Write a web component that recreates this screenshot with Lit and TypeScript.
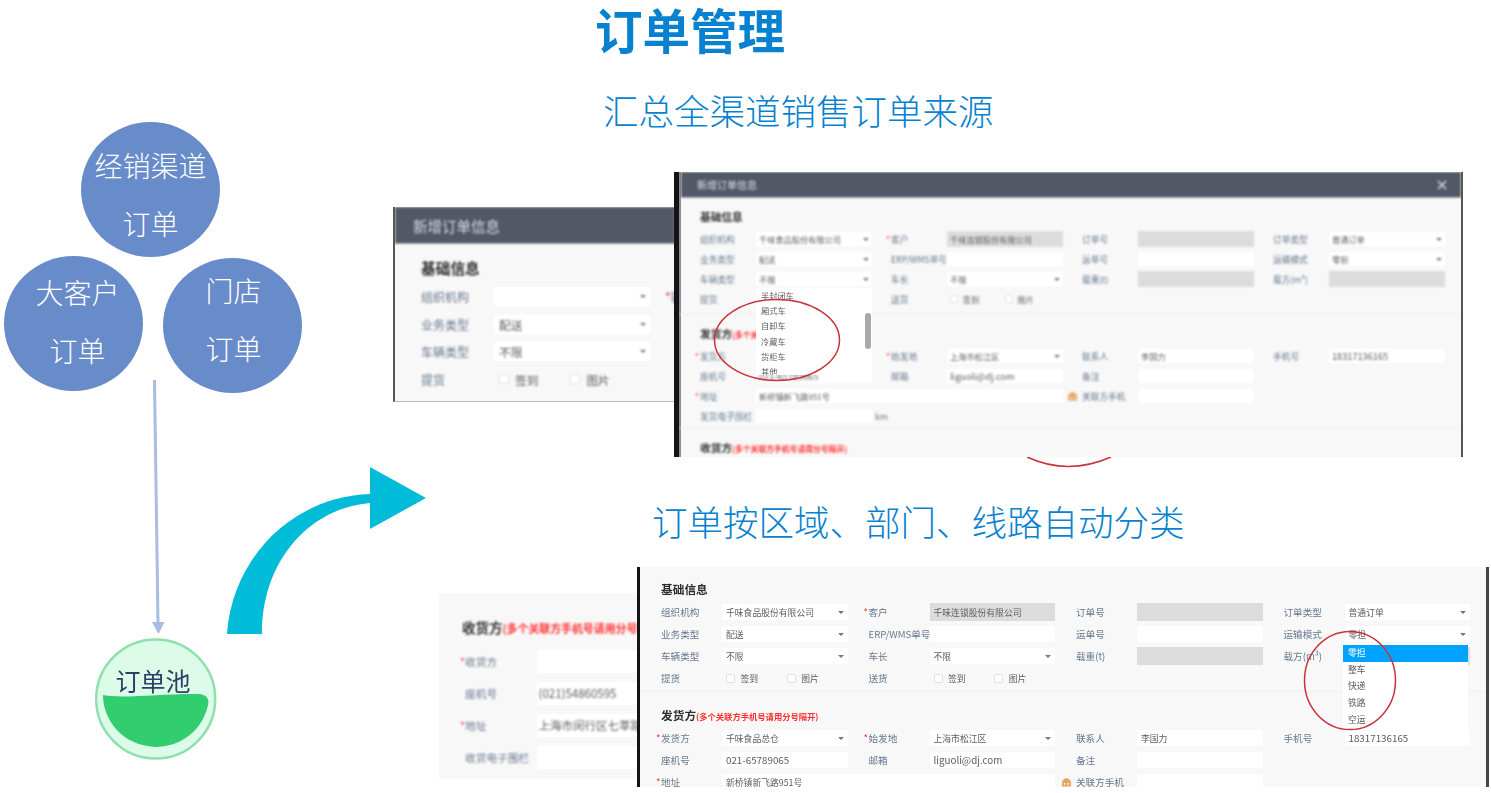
import { LitElement, html, css, svg } from "lit";
import { customElement } from "lit/decorators.js";

const arrowIcon = svg`<path d="M0 0h6L3 3z" fill="#777"></path>`;

const L = (text: string, req = false, icon = false) => html`<div class="lb">
  ${req ? html`<span class="star">*</span>` : ""}${icon
    ? html`<svg class="house" viewBox="0 0 12 11"><path d="M1 10.500V6.500a5 5 0 0 1 10 0v4z" fill="#e6a765"></path><circle cx="4" cy="7.500" r="1" fill="#fff"></circle><circle cx="8" cy="7.500" r="1" fill="#fff"></circle></svg>`
    : ""}${text}
</div>`;
const S = (v = "") => html`<div class="in sel"><span>${v}</span><svg class="caret" viewBox="0 0 6 3">${arrowIcon}</svg></div>`;
const I = (v = "", cls = "") => html`<div class="in ${cls}"><span>${v}</span></div>`;
const D = (v = "") => html`<div class="in dis"><span>${v}</span></div>`;
const C = () => html`<div class="checks">
  <i class="cb"></i><span>签到</span><i class="cb second"></i><span>图片</span>
</div>`;
const R = (...cells: unknown[]) => html`<div class="row">${cells}</div>`;

const baseRows = (org = "千味食品股份有限公司") => html`
  ${R(L("组织机构"), S(org), L("客户", true), D("千味连锁股份有限公司"), L("订单号"), D(), L("订单类型"), S("普通订单"))}
  ${R(L("业务类型"), S("配送"), L("ERP/WMS单号"), I(), L("运单号"), I(), L("运输模式"), S("零担"))}
  ${R(L("车辆类型"), S("不限"), L("车长"), S("不限"), L("载重(t)"), D(), L("载方(m³)"), D())}
  ${R(L("提货"), C(), L("送货"), C())}
`;

const shipRows = html`
  ${R(L("发货方", true), S("千味食品总仓"), L("始发地", true), S("上海市松江区"), L("联系人"), I("李国力"), L("手机号"), I("18317136165", "num"))}
  ${R(L("座机号"), I("021-65789065", "num"), L("邮箱"), I("liguoli@dj.com", "num"), L("备注"), I())}
  <div class="row">
    ${L("地址", true)}
    <div class="in span3"><span>新桥镇新飞路951号</span></div>
    ${L("关联方手机", false, true)}${I()}
  </div>
`;

const hint = "(多个关联方手机号请用分号隔开)";

@customElement("app-root")
export class AppRoot extends LitElement {
  static styles = css`
    :host { display: block; font-family: "Noto Sans CJK SC", "Noto Sans", sans-serif; }
    .slide { position: relative; width: 1491px; height: 793px; overflow: hidden; background: #fff; }

    .title, .sub { position: absolute; margin: 0; color: #0781d0; white-space: nowrap; line-height: 1; }
    .title { left: 595px; top: 5px; font-size: 47.500px; font-weight: 700; filter: blur(0.3px); }
    .sub { font-size: 35.500px; font-weight: 300; }
    .s1 { left: 603px; top: 92px; }
    .s2 { left: 652px; top: 503px; }

    .bubble {
      position: absolute; box-sizing: border-box; width: 139px; height: 135px; border-radius: 50%;
      background: #688bc9; color: #fff; font-size: 28px; line-height: 58px; font-weight: 300;
      display: flex; flex-direction: column; align-items: center; justify-content: center;
    }
    .b1 { left: 81px; top: 122px; padding-top: 9px; }
    .b2 { left: 4px; top: 256px; padding: 0 0 6px 8px; }
    .b3 { left: 163px; top: 258px; padding: 0 0 13px 2px; }

    .art { position: absolute; inset: 0; width: 1491px; height: 793px; pointer-events: none; }
    .under { filter: blur(0.4px); }
    .pool-text { position: absolute; left: 113px; top: 662px; width: 80px; text-align: center; font-size: 25px; line-height: 36px; color: #2c3f66; filter: blur(0.25px); }

    .pic {
      position: absolute; box-sizing: border-box; overflow: hidden; background: #f8f8f8;
      --hpt: 12px; --hmb: 5px; --blur: 0.800px;
    }
    .pic .blur { filter: blur(var(--blur)); height: 100%; display: flex; flex-direction: column; }
    .head { flex: none; box-sizing: border-box; background: #535867; color: #d9dbe2; border-bottom: 1px solid #a9abb3; display: flex; align-items: center; justify-content: space-between; }
    .sec { padding-left: var(--px); padding-bottom: 5px; border-bottom: 1px solid #f0f0f0; flex: none; }
    .sec.tight { padding-bottom: 2px; }
    .sec:last-child { border-bottom: none; }
    .h { font-size: var(--hfs); line-height: var(--hh); height: var(--hh); margin: 0 0 var(--hmb) var(--hx, 0); padding-top: var(--hpt); box-sizing: content-box; font-weight: 700; color: #2e2e2e; white-space: nowrap; }
    .h em { font-style: normal; font-size: var(--hint); color: #ff3030; }
    .grid {
      display: grid; align-items: center; grid-auto-rows: var(--rh);
      grid-template-columns: var(--lw) var(--iw) var(--gw) var(--iw) var(--gw) var(--iw) var(--gw) var(--iw);
    }
    .row { display: contents; }
    .row > :first-child { grid-column: 1; padding-left: 0; }
    .lb { font-size: var(--lfs); color: #66788f; white-space: nowrap; padding-left: var(--lp); }
    .lb.unit { padding-left: 3px; }
    .star { color: #f03a3a; display: inline-block; width: 5px; margin-left: -5px; }
    .house { width: 11px; height: 10px; margin-left: -15px; margin-right: 4px; vertical-align: -1px; }
    .in {
      box-sizing: border-box; height: var(--ih); background: #fff; font-size: var(--ifs); color: #5c5c5c;
      display: flex; align-items: center; justify-content: space-between; padding: 0 var(--ipx); white-space: nowrap; overflow: hidden;
    }
    .in.num { font-size: calc(var(--ifs) + 1px); }
    .in.dis { background: #dcdcdc; height: calc(var(--ih) + 2px); }
    .in.span3 { grid-column: span 3; }
    .caret { flex: none; width: 6px; height: 3px; }
    .checks { display: flex; align-items: center; font-size: var(--ifs); color: #5c5c5c; padding-left: var(--ipx); white-space: nowrap; }
    .cb { flex: none; width: var(--cb); height: var(--cb); background: #fff; border: 1px solid #e0e0e0; box-sizing: border-box; border-radius: 2px; margin-right: calc(var(--cb) * 0.6); }
    .cb.second { margin-left: calc(var(--cb) * 3.2); }

    .menu { position: absolute; background: #fff; font-size: var(--ifs); color: #5c5c5c; filter: blur(0.7px); overflow: hidden; }
    .menu div { padding-left: 5px; white-space: nowrap; }
    .sb { position: absolute; right: 1px; top: 25px; width: 6px; height: 36px; border-radius: 3px; background: #a9a9a9; }

    .front1 {
      left: 674px; top: 172px; width: 789px; height: 285px; border-left: 5px solid #141414; border-right: 2px solid #555;
      --px: 21px; --lw: 56px; --iw: 116px; --gw: 75px; --lp: 19px; --rh: 20px; --ih: 14px; --blur: 0.950px;
      --lfs: 8.700px; --ifs: 8.200px; --hfs: 10.700px; --hh: 14px; --hint: 7.800px; --ipx: 3px; --cb: 8px;
      box-shadow: inset 2px 0 0 #8c8e96;
    }
    .front1 .head { height: 26px; padding: 0 14px 0 16px; font-size: 10px; margin-left: 2px; }
    .front1 .menu { left: 77px; top: 116px; width: 116px; height: 87px; }
    .front1 .menu div { height: 15.200px; line-height: 15.200px; }
    .x { width: 10px; height: 10px; }

    .front2 {
      left: 637px; top: 567px; width: 852px; height: 220px; border-left: 3px solid #141414; border-right: 3px solid #444;
      --px: 21px; --lw: 61px; --iw: 125.500px; --gw: 82px; --lp: 21px; --rh: 22px; --ih: 16px; --blur: 0.750px;
      --lfs: 9.600px; --ifs: 8.800px; --hfs: 11.700px; --hh: 14px; --hint: 8.300px; --ipx: 4px; --cb: 9px;
      --hpt: 15px;
    }
    .front2 .sec { padding-bottom: 2px; }
    .front2 .sec + .sec { --hpt: 16px; }
    .front2 .menu { left: 703px; top: 77.500px; width: 125px; height: 85.500px; }
    .front2 .menu div { height: 16.700px; line-height: 16.700px; }
    .front2 .menu .on { background: #00a2ff; color: #fff; height: 17px; }

    .back1 {
      left: 393px; top: 207px; width: 282px; height: 195px; border-left: 2px solid #555; border-bottom: 1px solid #bbb;
      --px: 26px; --lw: 73px; --iw: 157px; --gw: 19px; --lp: 19px; --rh: 27.500px; --ih: 19px;
      --lfs: 12px; --ifs: 11.700px; --hfs: 14.700px; --hh: 18px; --hint: 10px; --ipx: 5px; --cb: 10px;
      --hpt: 15px; --hmb: 6px;
    }
    .back1 .head { height: 37px; padding-left: 18px; font-size: 14.500px; }
    .back1 .sec { border: none; white-space: nowrap; }

    .back2 {
      left: 439px; top: 593px; width: 199px; height: 186px;
      --px: 26px; --lw: 71.500px; --iw: 200px; --gw: 19px; --lp: 19px; --rh: 32px; --ih: 23px;
      --lfs: 10.700px; --ifs: 11.500px; --hfs: 13.500px; --hh: 18px; --hint: 10.900px; --ipx: 2px; --cb: 10px;
      --hpt: 25px; --hmb: 9px; --hx: -3px;
    }
  `;

  render() {
    return html`<div class="slide">
      <h1 class="title">订单管理</h1>
      <h2 class="sub s1">汇总全渠道销售订单来源</h2>
      <h2 class="sub s2">订单按区域、部门、线路自动分类</h2>

      <div class="bubble b1"><span>经销渠道</span><span>订单</span></div>
      <div class="bubble b2"><span>大客户</span><span>订单</span></div>
      <div class="bubble b3"><span>门店</span><span>订单</span></div>

      <svg class="art under" viewBox="0 0 1491 793">
        <path d="M154.500 380 L158 623" stroke="#a9bce6" stroke-width="3" fill="none"></path>
        <path d="M152 622h12.500l-6 12z" fill="#a9bce6"></path>
        <circle cx="155.700" cy="699" r="59.500" fill="#dcfbe8" stroke="#8fe0ad" stroke-width="2.500"></circle>
        <path d="M103 695C125 699 165 693 200 694Q208 695 208.500 702A53 52 0 0 1 103 695Z" fill="#32cd6e"></path>
        <path d="M227 634C232 560 290 497 370 494V467L426 498L370 529V503C310 508 262 560 262 634Z" fill="#00bcd8"></path>
        <path d="M1027 457Q1068 476 1111 457" stroke="#c8333b" stroke-width="1.500" fill="none"></path>
      </svg>
      <div class="pool-text">订单池</div>

      <div class="pic back1"><div class="blur">
        <div class="head"><span>新增订单信息</span></div>
        <div class="sec">
          <p class="h">基础信息</p>
          <div class="grid">
            ${R(L("组织机构"), S(""), L("客户", true))}
            ${R(L("业务类型"), S("配送"))}
            ${R(L("车辆类型"), S("不限"))}
            ${R(L("提货"), C())}
          </div>
        </div>
      </div></div>

      <div class="pic back2"><div class="blur">
        <div class="sec">
          <p class="h">收货方<em>${hint}</em></p>
          <div class="grid">
            ${R(L("收货方", true), I())}
            ${R(L("座机号"), I("(021)54860595"))}
            ${R(L("地址", true), I("上海市闵行区七莘路"))}
            ${R(L("收货电子围栏"), I())}
          </div>
        </div>
      </div></div>

      <div class="pic front1">
        <div class="blur">
          <div class="head">
            <span>新增订单信息</span>
            <svg class="x" viewBox="0 0 10 10"><path d="M1 1l8 8M9 1l-8 8" stroke="#d5d7de" stroke-width="1.600"></path></svg>
          </div>
          <div class="sec">
            <p class="h">基础信息</p>
            <div class="grid">${baseRows()}</div>
          </div>
          <div class="sec tight">
            <p class="h">发货方<em>${hint}</em></p>
            <div class="grid">
              ${shipRows}
              ${R(L("发货电子围栏"), I(), html`<div class="lb unit">km</div>`)}
            </div>
          </div>
          <div class="sec">
            <p class="h">收货方<em>${hint}</em></p>
          </div>
        </div>
        <div class="menu">
          <div>半封闭车</div><div>厢式车</div><div>自卸车</div><div>冷藏车</div><div>货柜车</div><div>其他</div>
          <span class="sb"></span>
        </div>
      </div>

      <div class="pic front2">
        <div class="blur">
          <div class="sec">
            <p class="h">基础信息</p>
            <div class="grid">${baseRows()}</div>
          </div>
          <div class="sec">
            <p class="h">发货方<em>${hint}</em></p>
            <div class="grid">${shipRows}</div>
          </div>
        </div>
        <div class="menu">
          <div class="on">零担</div><div>整车</div><div>快递</div><div>铁路</div><div>空运</div>
        </div>
      </div>

      <svg class="art" viewBox="0 0 1491 793">
        <ellipse cx="777" cy="340" rx="62.500" ry="40.500" fill="none" stroke="#c8333b" stroke-width="1.500"></ellipse>
        <ellipse cx="1350" cy="680.500" rx="45.500" ry="49" fill="none" stroke="#c8333b" stroke-width="1.500"></ellipse>
      </svg>
    </div>`;
  }
}
